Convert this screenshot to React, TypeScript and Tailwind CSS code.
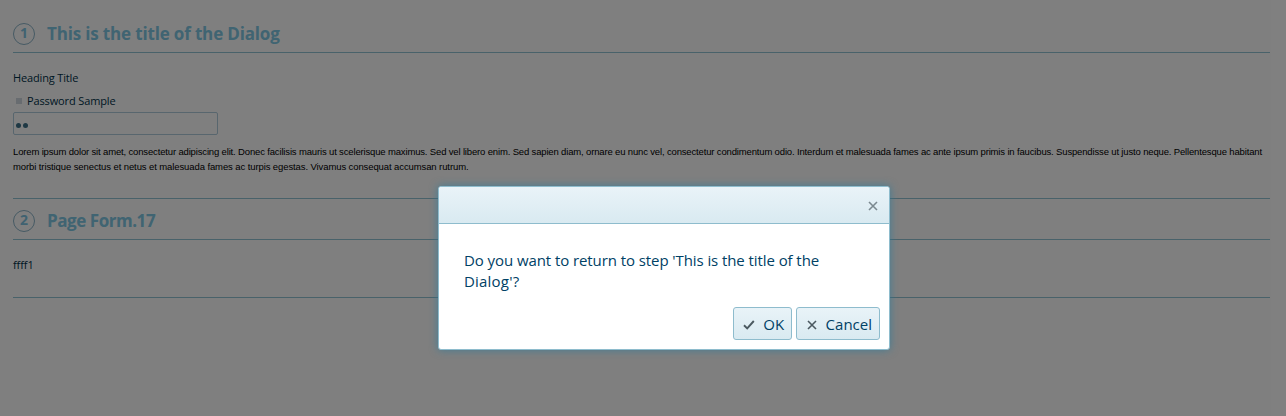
import type { ReactNode } from 'react';

function StepHeader({ number, titleClass, children }: { number: number; titleClass: string; children: ReactNode }) {
  return (
    <div className="flex h-[30px] items-center">
      <span className="-mt-px flex size-[22px] items-center justify-center rounded-full border border-[#8cb4c8] pb-px font-['Noto_Sans',sans-serif] text-[14px] leading-none font-bold text-[#80c4e2]">
        {number}
      </span>
      <h2 className={`ml-[12px] text-[17px] leading-[24px] font-bold whitespace-nowrap text-[#80c8e4] ${titleClass}`}>{children}</h2>
    </div>
  );
}

function CrossIcon({ className }: { className: string }) {
  return (
    <svg viewBox="0 0 10 10" className={className} fill="none" stroke="currentColor" strokeWidth="1.6">
      <path d="M1 1L9 9M9 1L1 9" />
    </svg>
  );
}

function CheckIcon() {
  return (
    <svg viewBox="0 0 12 10" className="mt-[2px] h-[10px] w-[12px] text-[#4b5960]" fill="none" stroke="currentColor" strokeWidth="1.9">
      <path d="M1 5.3L4.2 8.4L10.8 1" />
    </svg>
  );
}

function DialogButton({ icon, width, children }: { icon: ReactNode; width: string; children: ReactNode }) {
  return (
    <button
      className={`flex h-[33px] items-center justify-between rounded-[3px] border border-[#8ebccd] bg-linear-to-b from-[#e9f3f8] to-[#d9eaf1] pt-px pr-[7px] pl-[9px] text-[15px] text-[#004165] ${width}`}
    >
      {icon}
      {children}
    </button>
  );
}

export default function App() {
  return (
    <div className="relative h-[416px] overflow-hidden bg-white font-['Open_Sans','Noto_Sans',sans-serif]">
      <main className="flex flex-col pr-[16px] pl-[13px] text-[11px] text-[#003048]">
        <section className="h-[198px] pt-[19px]">
          <StepHeader number={1} titleClass="tracking-[-0.16px]">This is the title of the Dialog</StepHeader>
          <div className="mt-[3px] border-t border-[#92c4d4]" />
          <p className="mt-[17px] h-[16px] leading-[16px] tracking-[-0.15px]">Heading Title</p>
          <div className="mt-[7px] flex h-[15px] items-center">
            <span className="ml-[3px] size-[6px] bg-[#d0d8e0]" />
            <label className="ml-[5px] leading-[15px] tracking-[-0.13px]">Password Sample</label>
          </div>
          <div className="mt-[4px] flex h-[23px] w-[205px] items-center gap-[2px] rounded-[2px] border border-[#b0ccdc] pt-[4px] pl-[2px]">
            <span className="size-[5px] rounded-full bg-[#3c7088]" />
            <span className="size-[5px] rounded-full bg-[#3c7088]" />
          </div>
          <div className="mt-[9px] font-['Liberation_Sans',Arial,sans-serif] text-[9.5px] leading-[15px] whitespace-nowrap text-black">
            <p className="tracking-[-0.155px]">
              Lorem ipsum dolor sit amet, consectetur adipiscing elit. Donec facilisis mauris ut scelerisque maximus. Sed vel libero enim. Sed sapien diam, ornare eu nunc vel, consectetur condimentum odio. Interdum et malesuada fames ac ante ipsum primis in faucibus. Suspendisse ut justo neque. Pellentesque habitant
            </p>
            <p className="tracking-[-0.1px]">morbi tristique senectus et netus et malesuada fames ac turpis egestas. Vivamus consequat accumsan rutrum.</p>
          </div>
        </section>
        <section className="h-[100px] border-y border-[#92c4d4] pt-[7px]">
          <StepHeader number={2} titleClass="tracking-[-0.45px]">Page Form.17</StepHeader>
          <div className="mt-[3px] border-t border-[#92c4d4]" />
          <p className="mt-[17px] leading-[16px] tracking-[-0.1px]">ffff1</p>
        </section>
      </main>

      <div className="absolute inset-0 bg-black/50" />

      <div
        role="dialog"
        className="absolute top-[186px] left-[438px] flex h-[164px] w-[452px] flex-col rounded-[3px] border border-[#8ebccd] bg-white text-[15px] text-[#004165] shadow-[0_0_8px_rgba(50,125,155,0.8)]"
      >
        <div className="flex h-[37px] shrink-0 items-center justify-end rounded-t-[2px] border-b border-[#8ebccd] bg-linear-to-b from-[#e9f3f8] to-[#d9eaf1] pt-px pr-[11px]">
          <CrossIcon className="size-[10px] text-[#7b8990]" />
        </div>
        <div className="px-[25px] pt-[26px] leading-[21px] whitespace-nowrap">
          <p className="tracking-[-0.08px]">Do you want to return to step 'This is the title of the</p>
          <p className="tracking-[0.2px]">Dialog'?</p>
        </div>
        <div className="mt-auto flex justify-end gap-[4px] pr-[9px] pb-[9px]">
          <DialogButton width="w-[59px]" icon={<CheckIcon />}>
            <span className="tracking-[-0.1px]">OK</span>
          </DialogButton>
          <DialogButton width="w-[84px]" icon={<CrossIcon className="mt-px ml-px size-[10px] text-[#4b5960]" />}>
            <span>Cancel</span>
          </DialogButton>
        </div>
      </div>
    </div>
  );
}
